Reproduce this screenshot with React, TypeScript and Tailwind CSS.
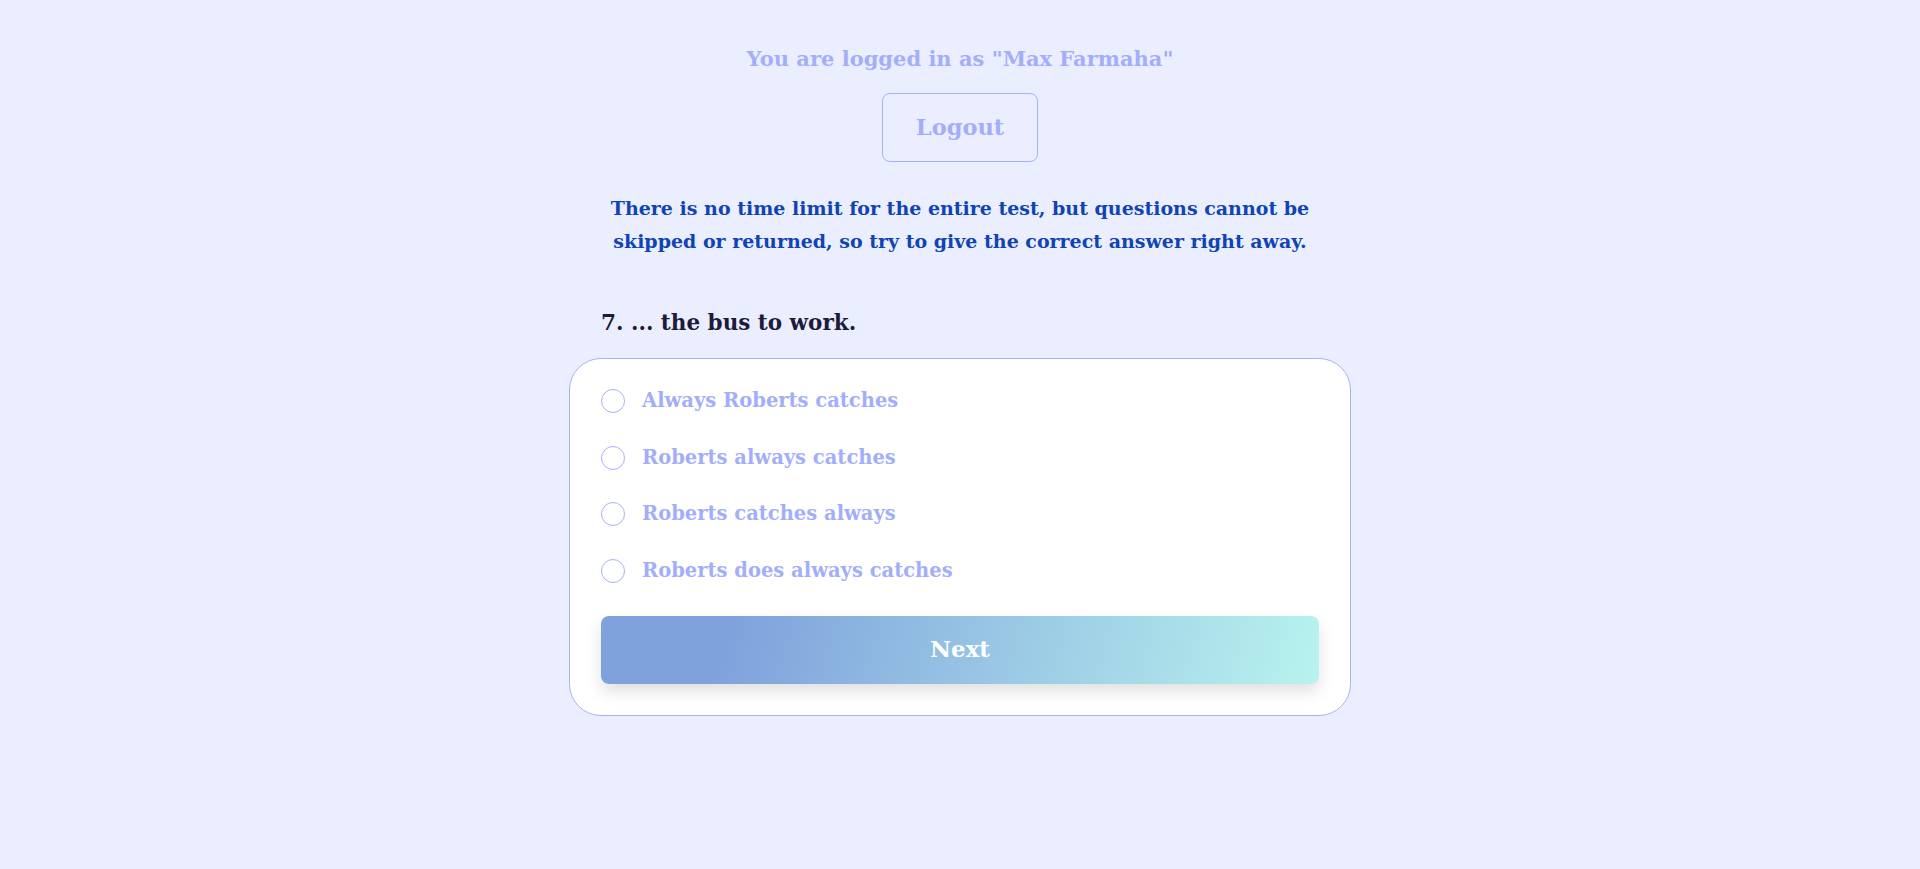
const options = [
  "Always Roberts catches",
  "Roberts always catches",
  "Roberts catches always",
  "Roberts does always catches",
];

export default function App() {
  return (
    <div className="min-h-screen bg-[#ebeeff] flex flex-col items-center pt-[44px] font-['DejaVu_Serif',serif]">
      <p className="text-[21px] font-bold leading-[30px] text-[#a3aefb]">
        You are logged in as "Max Farmaha"
      </p>
      <button className="mt-[19px] w-[156px] h-[69px] rounded-[8px] border border-[#a5b2fb] text-[22.5px] font-bold text-[#a3aefb]">
        Logout
      </button>
      <p className="mt-[30px] w-[740px] text-center text-[19px] font-bold leading-[33px] text-[#1044b4]">
        There is no time limit for the entire test, but questions cannot be skipped or returned, so try to give the correct answer right away.
      </p>
      <div className="mt-[50px] w-[782px]">
        <h2 className="px-8 text-[21.5px] font-bold leading-[30px] text-[#1d1b3a]">7. ... the bus to work.</h2>
        <div className="mt-[20px] rounded-[32px] border border-[#a5b2fb] bg-white px-[31px] pt-[30px] pb-[31px]">
          <div className="flex flex-col gap-[32.5px]">
            {options.map((o) => (
              <label key={o} className="flex h-[24px] items-center gap-[17px] cursor-pointer">
                <span className="h-[24px] w-[24px] shrink-0 rounded-full border border-[#a5b2fb] bg-white" />
                <span className="text-[19.5px] font-bold text-[#a3aefb]">{o}</span>
              </label>
            ))}
          </div>
          <button className="mt-[33px] h-[68px] w-full rounded-[8px] bg-[linear-gradient(105deg,#7fa2dc_18%,#b8f3ee_100%)] text-[23px] font-bold text-white shadow-[0_8px_16px_rgba(0,0,0,0.12)]">
            Next
          </button>
        </div>
      </div>
    </div>
  );
}
